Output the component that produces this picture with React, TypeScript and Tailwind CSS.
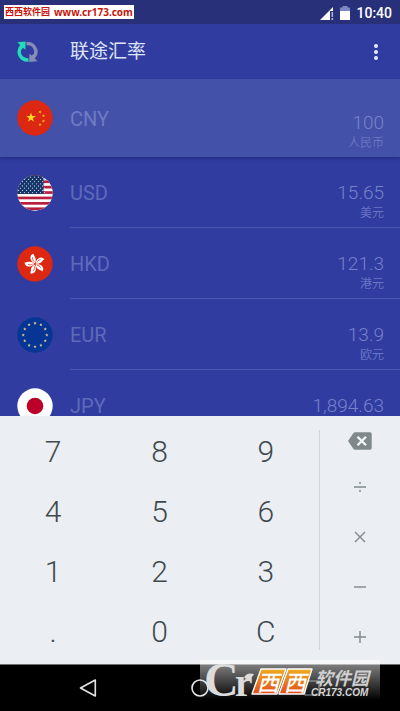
import type { ReactNode } from 'react';

const sans = "font-[Roboto,'Noto_Sans_CJK_SC',sans-serif]";

function starPoints(cx: number, cy: number, r: number, turn = 0) {
  return Array.from({ length: 10 }, (_, i) => {
    const a = ((i * 36 + turn - 90) * Math.PI) / 180;
    const d = i % 2 ? r * 0.4 : r;
    return `${(cx + d * Math.cos(a)).toFixed(2)},${(cy + d * Math.sin(a)).toFixed(2)}`;
  }).join(' ');
}

function Flag({ id, children }: { id: string; children: ReactNode }) {
  return (
    <svg viewBox="0 0 36 36" className="size-9 shrink-0" aria-hidden="true">
      <clipPath id={id}>
        <circle cx="18" cy="18" r="17.7" />
      </clipPath>
      <g clipPath={`url(#${id})`}>{children}</g>
    </svg>
  );
}

function China() {
  return (
    <Flag id="cn">
      <rect width="36" height="36" fill="#dc2712" />
      <polygon points={starPoints(14, 17.6, 5)} fill="#ffd91f" />
      <polygon points={starPoints(23, 12, 1.8, 20)} fill="#fbb81f" />
      <polygon points={starPoints(26.5, 15.8, 1.8, 0)} fill="#fbb81f" />
      <polygon points={starPoints(26.5, 21, 1.8, 20)} fill="#fbb81f" />
      <polygon points={starPoints(23, 24.6, 1.8, 0)} fill="#fbb81f" />
    </Flag>
  );
}

function Usa() {
  const dots: ReactNode[] = [];
  for (let r = 0; r < 8; r++) {
    for (let c = 0; c < 7; c++) {
      dots.push(<circle key={`${r}-${c}`} cx={1.5 + c * 4 + (r % 2) * 2} cy={2.2 + r * 2.2} r="0.65" fill="#c3d0e4" />);
    }
  }
  return (
    <Flag id="us">
      <rect width="36" height="36" fill="#fff" />
      {[0, 1, 2, 3, 4, 5, 6].map((i) => (
        <rect key={i} y={i * 5.4} width="36" height="2.7" fill="#b81f3c" />
      ))}
      <rect width="26.5" height="18.9" fill="#123468" />
      {dots}
    </Flag>
  );
}

function HongKong() {
  return (
    <Flag id="hk">
      <rect width="36" height="36" fill="#dc2712" />
      {[0, 72, 144, 216, 288].map((a) => (
        <g key={a} transform={`rotate(${a - 20} 18 18)`}>
          <path d="M18 17.2C15.6 15 14.9 12 16.3 9.6C17.2 8.2 18.6 7.6 20.2 7.8C19.3 9 20.6 10.6 20.4 12.8C20.3 14.8 19.4 16.4 18 17.2Z" fill="#fff" />
          <path d="M18 15.6C17.2 14 17.2 12.6 17.9 11" fill="none" stroke="#dc2712" strokeWidth="0.7" />
        </g>
      ))}
    </Flag>
  );
}

function Europe() {
  return (
    <Flag id="eu">
      <rect width="36" height="36" fill="#063596" />
      {Array.from({ length: 12 }, (_, i) => {
        const a = (i * Math.PI) / 6;
        return <polygon key={i} points={starPoints(18 + 11.8 * Math.sin(a), 18 - 11.8 * Math.cos(a), 1.8)} fill="#e3d08a" />;
      })}
    </Flag>
  );
}

function Japan() {
  return (
    <Flag id="jp">
      <rect width="36" height="36" fill="#fff" />
      <circle cx="18" cy="18" r="8.3" fill="#bd0029" />
    </Flag>
  );
}

const rows = [
  { code: 'USD', amount: '15.65', name: '美元', flag: <Usa /> },
  { code: 'HKD', amount: '121.3', name: '港元', flag: <HongKong /> },
  { code: 'EUR', amount: '13.9', name: '欧元', flag: <Europe /> },
  { code: 'JPY', amount: '1,894.63', name: '', flag: <Japan /> },
];

function Amount({ amount, name }: { amount: string; name: string }) {
  return (
    <div className="ml-auto flex h-10 flex-col items-end pr-4">
      <span className="text-[19px] leading-5 font-light text-[#7782cb]">{amount}</span>
      {name && <span className="text-xs leading-5 text-[#6974c2]">{name}</span>}
    </div>
  );
}

function StatusBar() {
  return (
    <div className="flex h-6 items-center justify-between bg-[#28307a] pr-2 pl-1">
      <div className="mb-[5px] flex h-3.5 items-center gap-1 self-end bg-white px-px whitespace-nowrap text-[#c8150c]">
        <span className="font-['Noto_Sans_CJK_SC',sans-serif] text-[9px] leading-3 font-bold">西西软件园</span>
        <span className="font-['Noto_Sans',sans-serif] text-[10px] leading-3 font-bold">www.cr173.com</span>
      </div>
      <div className="flex items-center gap-1.5 pt-0.5 text-white">
        <svg viewBox="0 0 14 14" className="size-3.5" aria-hidden="true">
          <path d="M0 14L13 1V5H10V14Z" fill="#fff" />
          <path d="M12.3 6V11M12.3 12V14" stroke="#aab0df" strokeWidth="1.6" />
        </svg>
        <svg viewBox="0 0 10 14" className="h-3.5 w-2.5" aria-hidden="true">
          <path d="M0 1.5H2.5V0H7.5V1.5H10V5H0Z" fill="#8088c3" />
          <path d="M0 5H10V14H0Z" fill="#fff" />
        </svg>
        <span className="text-sm leading-5 font-medium">10:40</span>
      </div>
    </div>
  );
}

function AppBar() {
  return (
    <header className="flex h-[55px] items-center px-4">
      <svg viewBox="0 0 24 24" className="size-6" aria-hidden="true">
        <path d="M12.5 19.8A8 8 0 0 1 4.6 7.5" fill="none" stroke="#20dcbb" strokeWidth="3.4" />
        <path d="M1.2 2.2L9.6 1.4L9.4 9.8L7.2 8L4.4 9.6L2.6 7.6L4.2 5Z" fill="#20dcbb" />
        <path d="M10.5 3.8A8 8 0 0 1 18.2 16.5" fill="none" stroke="#858eb5" strokeWidth="3.4" />
        <path d="M21.6 21.2L13.2 22L13.4 13.6L15.6 15.4L18.4 13.8L20.2 15.8L18.8 18.4Z" fill="#858eb5" />
      </svg>
      <h1 className="ml-[30px] text-[19px] leading-7 text-[#dfe3f8]">联途汇率</h1>
      <button type="button" aria-label="菜单" className="ml-auto flex w-4 justify-center">
        <svg viewBox="0 0 4 16" className="h-4 w-1" aria-hidden="true">
          <circle cx="2" cy="2" r="2" fill="#e8ebfb" />
          <circle cx="2" cy="8" r="2" fill="#e8ebfb" />
          <circle cx="2" cy="14" r="2" fill="#e8ebfb" />
        </svg>
      </button>
    </header>
  );
}

function CurrencyList() {
  return (
    <main className="min-h-0 flex-1 overflow-hidden">
      <div className="relative flex h-[78px] items-center bg-[#4351a8] pl-[17px] text-[#6f7bc4] shadow-[0_1px_3px_rgba(20,25,90,0.6)]">
        <China />
        <div className="ml-[17px] flex flex-1 items-center pt-0.5">
          <span className="text-xl leading-6">CNY</span>
          <div className="ml-auto pt-7">
            <Amount amount="100" name="人民币" />
          </div>
        </div>
      </div>
      <ul>
        {rows.map((row) => (
          <li key={row.code} className="flex h-[71px] pl-[17px] text-[#5e6abb]">
            <div className="flex items-center">{row.flag}</div>
            <div className="ml-[17px] flex flex-1 items-center border-b border-[#4b58af] pt-0.5">
              <span className="text-xl leading-6">{row.code}</span>
              <div className="ml-auto pt-5">
                <Amount amount={row.amount} name={row.name} />
              </div>
            </div>
          </li>
        ))}
      </ul>
    </main>
  );
}

const keys = ['7', '8', '9', '4', '5', '6', '1', '2', '3', '.', '0', 'C'];

const operators = [
  { label: '除', art: <path d="M4 10H16M10 5V7M10 13V15" /> },
  { label: '乘', art: <path d="M5 5L15 15M15 5L5 15" /> },
  { label: '减', art: <path d="M4 10H16" /> },
  { label: '加', art: <path d="M4 10H16M10 4V16" /> },
];

function Keypad() {
  return (
    <section className="flex h-[248px] shrink-0 bg-[#ebeff3]">
      <div className="grid flex-1 grid-cols-3 grid-rows-4 pt-1.5 pb-0.5">
        {keys.map((key) => (
          <button key={key} type="button" className="text-3xl leading-9 font-light text-[#3f494d]">
            {key}
          </button>
        ))}
      </div>
      <div className="my-3.5 w-px bg-[#cfd4d7]" />
      <div className="flex w-20 flex-col items-center">
        <button type="button" aria-label="退格" className="flex h-[46px] w-full items-end justify-center pb-3">
          <svg viewBox="0 0 24 18" className="h-[18px] w-6" aria-hidden="true">
            <path d="M0 9L5.5 1Q6 0.3 7 0.3H22Q23.7 0.3 23.7 2V16Q23.7 17.7 22 17.7H7Q6 17.7 5.5 17Z" fill="#7f898b" />
            <path d="M9.5 4.7L18 13.3M18 4.7L9.5 13.3" stroke="#f4f7f8" strokeWidth="2.3" />
          </svg>
        </button>
        {operators.map((op) => (
          <button key={op.label} type="button" aria-label={op.label} className="flex h-[50px] w-full items-center justify-center">
            <svg viewBox="0 0 20 20" className="size-5" fill="none" stroke="#7f898b" strokeWidth="1.4" aria-hidden="true">
              {op.art}
            </svg>
          </button>
        ))}
      </div>
    </section>
  );
}

function SiteBadge() {
  return (
    <div className="absolute right-5 bottom-[11px] h-10 w-[180px] bg-linear-to-b from-white/50 from-10% to-transparent">
      <div className="h-1 bg-[#f5f7f8]" />
      <div className="absolute top-0 left-1 flex items-baseline font-['Liberation_Serif',serif] leading-10 font-bold text-[#dcdcdc]">
        <span className="text-5xl leading-10">C</span>
        <span className="-ml-1 text-[40px] leading-10">r</span>
      </div>
      <svg viewBox="0 0 180 40" className="absolute inset-0 h-10 w-[180px]" aria-hidden="true">
        <defs>
          <linearGradient id="amber" x1="0" y1="0" x2="0" y2="1">
            <stop offset="0" stopColor="#f0ac20" />
            <stop offset="1" stopColor="#df4e1c" />
          </linearGradient>
        </defs>
        <path d="M44 18Q46 12 54 14Q51 20 44 18Z" fill="#dcdcdc" />
        <path d="M61 9H86L77 34H52Z" fill="url(#amber)" stroke="#fff" strokeWidth="1.4" strokeLinejoin="round" />
        <path d="M88 9H112L104 34H79Z" fill="url(#amber)" stroke="#fff" strokeWidth="1.4" strokeLinejoin="round" />
      </svg>
      <span className="absolute top-[9px] left-[57px] flex gap-[5px] font-['Noto_Sans_CJK_SC',sans-serif] text-[22px] leading-6 font-medium text-white italic">
        <span>西</span>
        <span>西</span>
      </span>
      <span className="absolute top-[9px] left-[115px] font-['Noto_Sans_CJK_SC',sans-serif] text-lg leading-4 font-bold whitespace-nowrap text-[#cfcfcf] italic">软件园</span>
      <span className="absolute top-[27px] left-[111px] font-['Liberation_Sans',sans-serif] text-[10px] leading-3 font-bold whitespace-nowrap text-[#d6d6d6] italic">CR173.COM</span>
    </div>
  );
}

function NavBar() {
  return (
    <nav className="relative flex h-[47px] shrink-0 items-center justify-around border-t border-[#6d7072] bg-black px-8 text-[#e4e4e4]">
      <button type="button" aria-label="返回">
        <svg viewBox="0 0 18 18" className="size-[18px]" fill="none" stroke="currentColor" strokeWidth="1.6" strokeLinejoin="round" aria-hidden="true">
          <path d="M1.5 9L16.3 1V17Z" />
        </svg>
      </button>
      <button type="button" aria-label="主页">
        <svg viewBox="0 0 18 18" className="size-[18px]" fill="none" stroke="currentColor" strokeWidth="1.6" aria-hidden="true">
          <circle cx="9" cy="9" r="8" />
        </svg>
      </button>
      <button type="button" aria-label="最近" className="text-[#777777]">
        <svg viewBox="0 0 18 18" className="size-[18px]" fill="none" stroke="currentColor" strokeWidth="1.2" aria-hidden="true">
          <rect x="2" y="2" width="14" height="14" />
        </svg>
      </button>
      <SiteBadge />
    </nav>
  );
}

export default function App() {
  return (
    <div className={`flex h-screen flex-col overflow-hidden bg-[#303c9f] ${sans}`}>
      <StatusBar />
      <AppBar />
      <CurrencyList />
      <Keypad />
      <NavBar />
    </div>
  );
}
